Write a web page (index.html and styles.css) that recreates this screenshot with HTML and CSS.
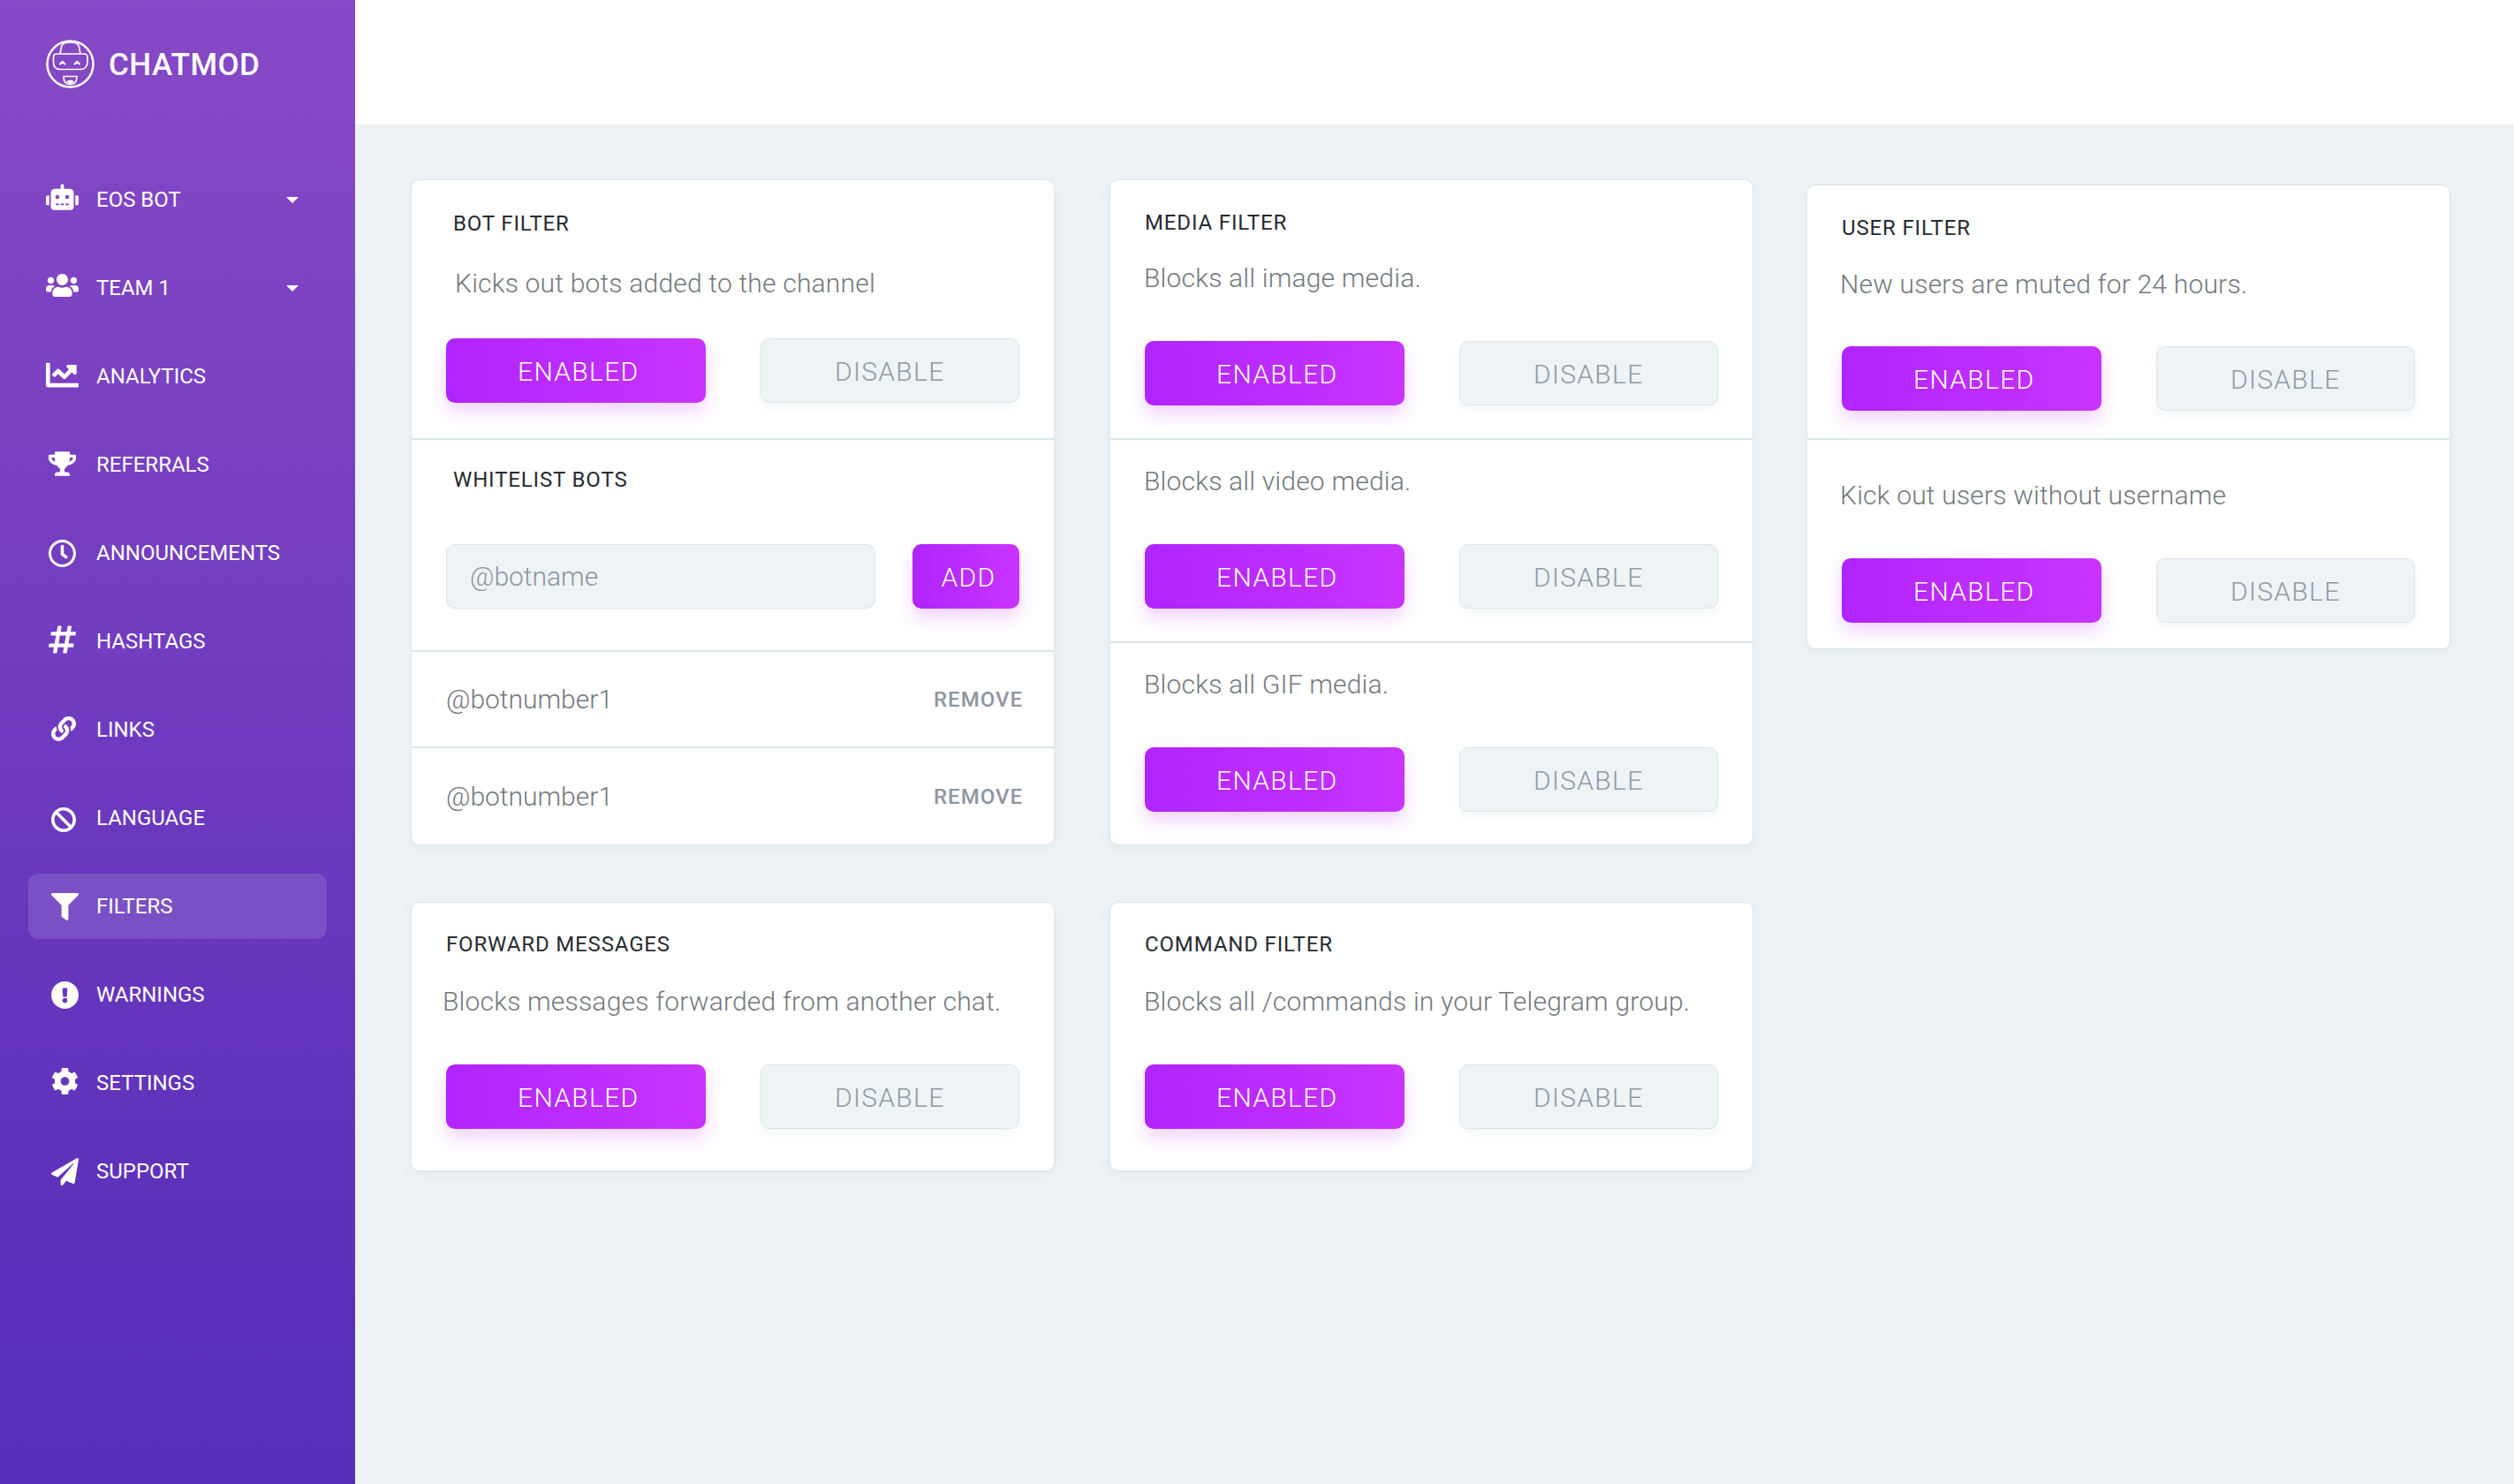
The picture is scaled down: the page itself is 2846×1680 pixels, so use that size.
FILE: index.html
```html
<!DOCTYPE html>
<html lang="en">
  <head>
    <meta charset="UTF-8" />
    <title>Chatmod Filters</title>
    <link rel="stylesheet" href="styles.css">
  </head>
  <body>
    <div class="app">
      <aside class="sidebar">
        <div class="brand">
          <svg class="brand-logo" viewBox="0 0 55 55" fill="none" stroke="#fff" stroke-width="1.7">
            <circle cx="27.5" cy="27.5" r="26" stroke-width="2.5" />
            <path d="M16 16L17.500 8C18 4.500 21 3 27.500 3S37 4.500 37.500 8L39 16" />
            <path d="M12 16H43C45.500 16 47 17.500 47 20V25C47 30 44 33.500 39 33.500H16C11 33.500 8.500 30 8.500 25V20C8.500 17.500 10 16 12 16Z" />
            <path d="M15.500 28L18.700 25L22 28M32 28L35.300 25L38.500 28" stroke-width="2.2" />
            <path d="M20 41.500H35C35 48 31.500 50.500 27.500 50.500S20 48 20 41.500Z" />
            <path d="M23 47Q27.500 44 32 47Q30 50 27.500 50T23 47Z" fill="#fff" stroke="none" />
          </svg>
          <span class="brand-name">CHATMOD</span>
        </div>
        <nav class="nav">
          <a class="nav-item" href="#">
            <svg class="icon icon-robot" viewBox="0 0 640 512"><path d="M32,224H64V416H32A31.96166,31.96166,0,0,1,0,384V256A31.96166,31.96166,0,0,1,32,224Zm512-48V448a64.06328,64.06328,0,0,1-64,64H160a64.06328,64.06328,0,0,1-64-64V176a79.974,79.974,0,0,1,80-80H288V32a32,32,0,0,1,64,0V96H464A79.974,79.974,0,0,1,544,176ZM264,256a40,40,0,1,0-40,40A39.997,39.997,0,0,0,264,256Zm-8,128H192v32h64Zm96,0H288v32h64ZM456,256a40,40,0,1,0-40,40A39.997,39.997,0,0,0,456,256Zm-8,128H384v32h64ZM640,256V384a31.96166,31.96166,0,0,1-32,32H576V224h32A31.96166,31.96166,0,0,1,640,256Z"/></svg>
            <span>EOS BOT</span>
            <i class="caret"></i>
          </a>
          <a class="nav-item" href="#">
            <svg class="icon icon-users" viewBox="0 0 640 512"><path d="M96 224c35.3 0 64-28.7 64-64s-28.7-64-64-64-64 28.7-64 64 28.7 64 64 64zm448 0c35.3 0 64-28.7 64-64s-28.7-64-64-64-64 28.7-64 64 28.7 64 64 64zm32 32h-64c-17.6 0-33.5 7.1-45.1 18.6 40.3 22.1 68.9 62 75.1 109.4h66c17.7 0 32-14.3 32-32v-32c0-35.3-28.7-64-64-64zm-256 0c61.9 0 112-50.1 112-112S381.9 32 320 32 208 82.1 208 144s50.1 112 112 112zm76.8 32h-8.3c-20.8 10-43.9 16-68.5 16s-47.6-6-68.5-16h-8.3C179.6 288 128 339.6 128 403.2V432c0 26.5 21.5 48 48 48h288c26.5 0 48-21.5 48-48v-28.8c0-63.6-51.6-115.2-115.2-115.2zm-223.7-13.4C161.5 263.1 145.6 256 128 256H64c-35.3 0-64 28.7-64 64v32c0 17.7 14.3 32 32 32h65.9c6.3-47.4 34.9-87.3 75.2-109.4z"/></svg>
            <span>TEAM 1</span>
            <i class="caret"></i>
          </a>
          <a class="nav-item" href="#">
            <svg class="icon icon-chart" viewBox="0 0 512 512"><path d="M496 384H64V80c0-8.840-7.160-16-16-16H16C7.160 64 0 71.160 0 80v336c0 17.670 14.330 32 32 32h464c8.840 0 16-7.160 16-16v-32c0-8.840-7.160-16-16-16zM464 96H345.940c-21.380 0-32.090 25.850-16.970 40.970l32.400 32.400L288 242.750l-73.370-73.370c-12.500-12.500-32.760-12.500-45.250 0l-68.690 68.690c-6.250 6.250-6.250 16.380 0 22.630l22.620 22.620c6.250 6.250 16.380 6.250 22.630 0L192 237.250l73.370 73.370c12.500 12.500 32.760 12.500 45.250 0l96-96 32.400 32.400c15.120 15.120 40.970 4.410 40.970-16.970V112c.01-8.840-7.150-16-15.990-16z"/></svg>
            <span>ANALYTICS</span>
          </a>
          <a class="nav-item" href="#">
            <svg class="icon icon-trophy" viewBox="0 0 576 512"><path d="M552 64H448V24c0-13.300-10.700-24-24-24H152c-13.300 0-24 10.700-24 24v40H24C10.700 64 0 74.700 0 88v56c0 35.700 22.500 72.400 61.900 100.700 31.500 22.700 69.800 37.100 110 41.700C203.300 338.500 240 360 240 360v72h-48c-35.300 0-64 20.700-64 56v12c0 6.600 5.400 12 12 12h296c6.600 0 12-5.400 12-12v-12c0-35.300-28.700-56-64-56h-48v-72s36.700-21.500 68.100-73.600c40.300-4.600 78.600-19 110-41.700 39.300-28.300 61.900-65 61.900-100.700V88c0-13.300-10.700-24-24-24zM99.300 192.800C74.900 175.200 64 155.600 64 144v-16h64.200c1 32.600 5.800 61.200 12.800 86.200-15.100-5.200-29.200-12.400-41.700-21.400zM512 144c0 16.100-17.700 36.100-35.300 48.800-12.500 9-26.700 16.200-41.800 21.400 7-25 11.800-53.600 12.800-86.200H512v16z"/></svg>
            <span>REFERRALS</span>
          </a>
          <a class="nav-item" href="#">
            <svg class="icon icon-clock" viewBox="8 8 496 496"><path d="M256 8C119 8 8 119 8 256s111 248 248 248 248-111 248-248S393 8 256 8zm0 448c-110.500 0-200-89.500-200-200S145.500 56 256 56s200 89.500 200 200-89.500 200-200 200zm61.800-104.400l-84.900-61.700c-3.100-2.300-4.900-5.900-4.900-9.700V116c0-6.600 5.400-12 12-12h32c6.600 0 12 5.400 12 12v141.700l66.800 48.600c5.400 3.900 6.500 11.400 2.600 16.800L334.600 349c-3.900 5.300-11.400 6.500-16.800 2.600z"/></svg>
            <span>ANNOUNCEMENTS</span>
          </a>
          <a class="nav-item" href="#">
            <svg class="icon icon-hashtag" viewBox="0 32 448 448"><path d="M440.667 182.109l7.143-40c1.313-7.355-4.342-14.109-11.813-14.109h-74.810l14.623-81.891C377.123 38.754 371.468 32 363.997 32h-40.632a12 12 0 0 0-11.813 9.891L296.175 128H197.540l14.623-81.891C213.477 38.754 207.822 32 200.350 32h-40.632a12 12 0 0 0-11.813 9.891L132.528 128H53.432a12 12 0 0 0-11.813 9.891l-7.143 40C33.163 185.246 38.818 192 46.289 192h74.810L98.242 320H19.146a12 12 0 0 0-11.813 9.891l-7.143 40C-1.123 377.246 4.532 384 12.003 384h74.810L72.190 465.891C70.877 473.246 76.532 480 84.003 480h40.632a12 12 0 0 0 11.813-9.891L151.826 384h98.634l-14.623 81.891C234.523 473.246 240.178 480 247.650 480h40.632a12 12 0 0 0 11.813-9.891L315.472 384h79.096a12 12 0 0 0 11.813-9.891l7.143-40c1.313-7.355-4.342-14.109-11.813-14.109h-74.810l22.857-128h79.096a12 12 0 0 0 11.813-9.891zM261.889 320h-98.634l22.857-128h98.634l-22.857 128z"/></svg>
            <span>HASHTAGS</span>
          </a>
          <a class="nav-item" href="#">
            <svg class="icon icon-link" viewBox="0 0 512 512"><path d="M326.612 185.391c59.747 59.809 58.927 155.698.360 214.590-.110.120-.240.250-.360.370l-67.200 67.200c-59.270 59.270-155.699 59.262-214.960 0-59.270-59.260-59.270-155.700 0-214.960l37.106-37.106c9.840-9.840 26.786-3.300 27.294 10.606.648 17.722 3.826 35.527 9.690 52.721 1.986 5.822.567 12.262-3.783 16.612l-13.087 13.087c-28.026 28.026-28.905 73.660-1.155 101.960 28.024 28.579 74.086 28.749 102.325.510l67.200-67.190c28.191-28.191 28.073-73.757 0-101.830-3.701-3.694-7.429-6.564-10.341-8.569a16.037 16.037 0 0 1-6.947-12.606c-.396-10.567 3.348-21.456 11.698-29.806l21.054-21.055c5.521-5.521 14.182-6.199 20.584-1.731a152.482 152.482 0 0 1 20.522 17.197zM467.547 44.449c-59.261-59.262-155.690-59.270-214.960 0l-67.200 67.200c-.120.120-.250.250-.360.370-58.566 58.892-59.387 154.781.360 214.590a152.454 152.454 0 0 0 20.521 17.196c6.402 4.468 15.064 3.789 20.584-1.731l21.054-21.055c8.350-8.350 12.094-19.239 11.698-29.806a16.037 16.037 0 0 0-6.947-12.606c-2.912-2.005-6.640-4.875-10.341-8.569-28.073-28.073-28.191-73.639 0-101.830l67.200-67.190c28.239-28.239 74.300-28.069 102.325.510 27.750 28.300 26.872 73.934-1.155 101.960l-13.087 13.087c-4.350 4.350-5.769 10.790-3.783 16.612 5.864 17.194 9.042 34.999 9.690 52.721.509 13.906 17.454 20.446 27.294 10.606l37.106-37.106c59.271-59.259 59.271-155.699.001-214.959z"/></svg>
            <span>LINKS</span>
          </a>
          <a class="nav-item" href="#">
            <svg class="icon icon-ban" viewBox="8 8 496 496"><path d="M256 8C119.034 8 8 119.033 8 256s111.034 248 248 248 248-111.034 248-248S392.967 8 256 8zm130.108 117.892c65.448 65.448 70 165.481 20.677 235.637L150.470 105.216c70.204-49.356 170.226-44.735 235.638 20.676zM125.892 386.108c-65.448-65.448-70-165.481-20.677-235.637L361.530 406.784c-70.203 49.356-170.226 44.736-235.638-20.676z"/></svg>
            <span>LANGUAGE</span>
          </a>
          <a class="nav-item is-active" href="#">
            <svg class="icon icon-filter" viewBox="0 0 512 512"><path d="M487.976 0H24.028C2.710 0-8.047 25.866 7.058 40.971L192 225.941V432c0 7.831 3.821 15.170 10.237 19.662l80 55.980C298.020 518.690 320 507.493 320 487.980V225.941l184.947-184.970C520.021 25.896 509.338 0 487.976 0z"/></svg>
            <span>FILTERS</span>
          </a>
          <a class="nav-item" href="#">
            <svg class="icon icon-warning" viewBox="8 8 496 496"><path d="M504 256c0 136.997-111.043 248-248 248S8 392.997 8 256C8 119.083 119.043 8 256 8s248 111.083 248 248zm-248 50c-25.405 0-46 20.595-46 46s20.595 46 46 46 46-20.595 46-46-20.595-46-46-46zm-43.673-165.346l7.418 136c.347 6.364 5.609 11.346 11.982 11.346h48.546c6.373 0 11.635-4.982 11.982-11.346l7.418-136c.375-6.874-5.098-12.654-11.982-12.654h-63.383c-6.884 0-12.356 5.780-11.981 12.654z"/></svg>
            <span>WARNINGS</span>
          </a>
          <a class="nav-item" href="#">
            <svg class="icon icon-cog" viewBox="0 0 512 512"><path d="M487.400 315.700l-42.600-24.600c4.300-23.200 4.300-47 0-70.200l42.600-24.600c4.900-2.800 7.100-8.600 5.500-14-11.100-35.600-30-67.800-54.700-94.600-3.800-4.100-10-5.100-14.800-2.300L380.800 110c-17.900-15.400-38.500-27.300-60.800-35.100V25.800c0-5.600-3.900-10.500-9.400-11.700-36.700-8.200-74.300-7.800-109.200 0-5.500 1.200-9.400 6.100-9.400 11.700V75c-22.200 7.900-42.800 19.800-60.800 35.100L88.700 85.500c-4.900-2.800-11-1.900-14.800 2.300-24.700 26.700-43.600 58.900-54.700 94.600-1.700 5.400.6 11.200 5.500 14L67.300 221c-4.300 23.200-4.300 47 0 70.200l-42.600 24.600c-4.900 2.800-7.100 8.600-5.500 14 11.100 35.600 30 67.800 54.700 94.600 3.800 4.100 10 5.100 14.800 2.300l42.600-24.600c17.900 15.400 38.500 27.300 60.800 35.100v49.200c0 5.600 3.900 10.500 9.400 11.700 36.700 8.200 74.300 7.800 109.200 0 5.500-1.200 9.400-6.100 9.400-11.700v-49.200c22.200-7.900 42.800-19.800 60.800-35.100l42.600 24.600c4.900 2.800 11 1.900 14.800-2.300 24.700-26.700 43.600-58.900 54.700-94.600 1.500-5.500-.7-11.300-5.600-14.100zM256 336c-44.100 0-80-35.900-80-80s35.900-80 80-80 80 35.900 80 80-35.900 80-80 80z"/></svg>
            <span>SETTINGS</span>
          </a>
          <a class="nav-item" href="#">
            <svg class="icon icon-plane" viewBox="0 0 512 512"><path d="M476 3.200L12.500 270.600c-18.100 10.400-15.800 35.600 2.200 43.200L121 358.400l287.300-253.200c5.500-4.900 13.300 2.600 8.600 8.300L176 407v80.500c0 23.600 28.500 32.900 42.500 15.800L282 426l124.600 52.200c14.200 6 30.400-2.900 33-18.200l72-432C515 7.800 493.300-6.800 476 3.200z"/></svg>
            <span>SUPPORT</span>
          </a>
        </nav>
      </aside>

      <div class="content">
        <header class="topbar"></header>
        <main class="board">
          <div class="column">
            <section class="card">
              <div class="panel panel-bot">
                <h3 class="panel-title">BOT FILTER</h3>
                <p class="panel-text">Kicks out bots added to the channel</p>
                <div class="btn-row">
                  <button class="btn btn-on">ENABLED</button>
                  <button class="btn btn-off">DISABLE</button>
                </div>
              </div>
              <div class="panel panel-whitelist">
                <h3 class="panel-title">WHITELIST BOTS</h3>
                <form class="add-form">
                  <input class="add-input" type="text" placeholder="@botname" />
                  <button class="btn btn-on btn-add" type="button">ADD</button>
                </form>
              </div>
              <div class="bot-row">
                <span>@botnumber1</span>
                <a class="remove-link" href="#">REMOVE</a>
              </div>
              <div class="bot-row">
                <span>@botnumber1</span>
                <a class="remove-link" href="#">REMOVE</a>
              </div>
            </section>
            <section class="card">
              <div class="panel panel-last panel-forward">
                <h3 class="panel-title">FORWARD MESSAGES</h3>
                <p class="panel-text">Blocks messages forwarded from another chat.</p>
                <div class="btn-row">
                  <button class="btn btn-on">ENABLED</button>
                  <button class="btn btn-off">DISABLE</button>
                </div>
              </div>
            </section>
          </div>

          <div class="column">
            <section class="card">
              <div class="panel panel-media">
                <h3 class="panel-title">MEDIA FILTER</h3>
                <p class="panel-text">Blocks all image media.</p>
                <div class="btn-row">
                  <button class="btn btn-on">ENABLED</button>
                  <button class="btn btn-off">DISABLE</button>
                </div>
              </div>
              <div class="panel panel-sub">
                <p class="panel-text">Blocks all video media.</p>
                <div class="btn-row">
                  <button class="btn btn-on">ENABLED</button>
                  <button class="btn btn-off">DISABLE</button>
                </div>
              </div>
              <div class="panel panel-sub">
                <p class="panel-text">Blocks all GIF media.</p>
                <div class="btn-row">
                  <button class="btn btn-on">ENABLED</button>
                  <button class="btn btn-off">DISABLE</button>
                </div>
              </div>
            </section>
            <section class="card">
              <div class="panel panel-last">
                <h3 class="panel-title">COMMAND FILTER</h3>
                <p class="panel-text">Blocks all /commands in your Telegram group.</p>
                <div class="btn-row">
                  <button class="btn btn-on">ENABLED</button>
                  <button class="btn btn-off">DISABLE</button>
                </div>
              </div>
            </section>
          </div>

          <div class="column column-users">
            <section class="card">
              <div class="panel panel-user">
                <h3 class="panel-title">USER FILTER</h3>
                <p class="panel-text">New users are muted for 24 hours.</p>
                <div class="btn-row">
                  <button class="btn btn-on">ENABLED</button>
                  <button class="btn btn-off">DISABLE</button>
                </div>
              </div>
              <div class="panel panel-username">
                <p class="panel-text">Kick out users without username</p>
                <div class="btn-row">
                  <button class="btn btn-on">ENABLED</button>
                  <button class="btn btn-off">DISABLE</button>
                </div>
              </div>
            </section>
          </div>
        </main>
      </div>
    </div>
  </body>
</html>
```
FILE: styles.css
```css
* {
  box-sizing: border-box;
}
body {
  margin: 0;
  font-family: Roboto, sans-serif;
  background-color: #edf2f5;
}
.app {
  display: flex;
  min-height: 1680px;
}

/* sidebar */
.sidebar {
  width: 402px;
  flex-shrink: 0;
  background: linear-gradient(180deg, #8749c6 0%, #552cb8 100%);
  color: #fff;
}
.brand {
  display: flex;
  align-items: center;
  gap: 16px;
  height: 55px;
  margin: 45px 0 89px 52px;
}
.brand-logo {
  width: 55px;
  height: 55px;
}
.brand-name {
  padding-top: 2px;
  font-size: 35px;
  font-weight: 500;
  letter-spacing: 0.5px;
}
.nav {
  display: flex;
  flex-direction: column;
  gap: 26px;
  padding: 0 32px;
}
.nav-item {
  display: flex;
  align-items: center;
  height: 74px;
  padding: 0 32px 0 20px;
  border-radius: 12px;
  color: #fff;
  text-decoration: none;
  font-size: 24px;
}
.nav-item.is-active {
  background-color: rgba(255, 255, 255, 0.13);
}
.icon {
  flex-shrink: 0;
  fill: #fff;
}
.icon-robot,
.icon-users {
  width: 37px;
  height: 30px;
  margin-right: 20px;
  margin-bottom: 6px;
}
.icon-chart {
  width: 37px;
  height: 37px;
  margin-right: 20px;
  margin-bottom: 4px;
}
.icon-trophy {
  width: 31px;
  height: 28px;
  margin: 0 23px 2px 3px;
}
.icon-clock {
  width: 31px;
  height: 31px;
  margin: 0 23px 0 3px;
}
.icon-hashtag {
  width: 31px;
  height: 32px;
  margin: 0 23px 4px 3px;
}
.icon-link {
  width: 28px;
  height: 28px;
  margin: 0 23px 2px 6px;
}
.icon-ban {
  width: 28px;
  height: 28px;
  margin: 4px 23px 0 6px;
}
.icon-filter,
.icon-warning,
.icon-plane {
  width: 31px;
  height: 31px;
  margin: 0 20px 0 6px;
}
.icon-cog {
  width: 31px;
  height: 32px;
  margin: 0 20px 4px 6px;
}
.caret {
  margin-left: auto;
  border-left: 7px solid transparent;
  border-right: 7px solid transparent;
  border-top: 7px solid #fff;
}

/* main area */
.content {
  flex: 1;
  min-width: 0;
}
.topbar {
  height: 142px;
  background-color: #fff;
  border-bottom: 1px solid #e6ecef;
}
.board {
  display: flex;
  gap: 62px;
  padding: 61px 0 0 63px;
}
.column {
  width: 729px;
  display: flex;
  flex-direction: column;
  gap: 64px;
}
.column-users {
  margin-top: 6px;
  margin-left: -2px;
}

/* cards */
.card {
  background-color: #fff;
  border: 1px solid #dde7ea;
  border-radius: 10px;
  box-shadow: 0 4px 12px rgba(160, 180, 190, 0.12);
}
.panel {
  padding: 31px 39px 37px;
  border-bottom: 2px solid #dbe6e8;
}
.card > :last-child {
  border-bottom: 0;
}
.panel-title {
  margin: 0 0 28px;
  padding-bottom: 2px;
  font-size: 24px;
  font-weight: 400;
  line-height: 30px;
  letter-spacing: 0.85px;
  color: #262b30;
}
.panel-text {
  margin: 0 0 51px -1px;
  font-size: 30px;
  font-weight: 300;
  line-height: 40px;
  letter-spacing: 0.2px;
  color: #73787d;
}
.panel-sub {
  padding-top: 27px;
}
.panel-media {
  padding-top: 33px;
}
.panel-media .panel-title {
  margin-bottom: 26px;
}
.panel-last {
  padding-top: 32px;
  padding-bottom: 47px;
}
.panel-forward .panel-text {
  margin-left: -4px;
}
.panel-bot {
  padding-top: 34px;
  padding-bottom: 40px;
}
.panel-bot .panel-title {
  margin-left: 8px;
  margin-bottom: 31px;
}
.panel-bot .panel-text {
  margin-left: 10px;
  margin-bottom: 42px;
}
.panel-whitelist {
  padding-top: 30px;
  padding-bottom: 47px;
}
.panel-whitelist .panel-title {
  margin-left: 8px;
  margin-bottom: 56px;
}
.panel-user {
  padding-top: 33px;
  padding-bottom: 31px;
}
.panel-user .panel-title {
  margin-bottom: 27px;
}
.panel-user .panel-text {
  margin-bottom: 50px;
  margin-left: -2px;
}
.panel-username {
  padding-top: 43px;
  padding-bottom: 29px;
}
.panel-username .panel-text {
  margin-left: -2px;
}

/* buttons */
.btn-row {
  display: grid;
  grid-template-columns: 1fr 1fr;
  gap: 62px;
}
.btn {
  height: 73px;
  padding: 2px 0 0;
  border-radius: 10px;
  font-family: inherit;
  font-size: 30px;
  font-weight: 300;
  letter-spacing: 1.3px;
}
.btn-on {
  border: 0;
  text-indent: 6px;
  color: #fff;
  background: linear-gradient(90deg, #b024fd 0%, #c934ff 100%);
  box-shadow: 0 10px 20px rgba(190, 50, 255, 0.22);
}
.btn-off {
  border: 1px solid #dbe4e8;
  color: #9299a5;
  background-color: #eef3f6;
  box-shadow: 0 6px 12px rgba(160, 180, 190, 0.1);
}

/* whitelist */
.add-form {
  display: flex;
  gap: 42px;
}
.add-input {
  flex: 1;
  min-width: 0;
  height: 73px;
  padding: 0 26px;
  border: 1px solid #dbe4e8;
  border-radius: 10px;
  background-color: #eef3f6;
  font-family: inherit;
  font-size: 30px;
  font-weight: 300;
}
.add-input::placeholder {
  color: #8d949e;
  opacity: 1;
}
.btn-add {
  flex: 0 0 121px;
}
.bot-row {
  display: flex;
  align-items: center;
  justify-content: space-between;
  height: 109px;
  padding: 0 35px 0 39px;
  border-bottom: 2px solid #dbe6e8;
  font-size: 30px;
  font-weight: 300;
  color: #73787d;
}
.remove-link {
  font-size: 24px;
  font-weight: 500;
  letter-spacing: 1px;
  color: #8f96a2;
  text-decoration: none;
}
```
